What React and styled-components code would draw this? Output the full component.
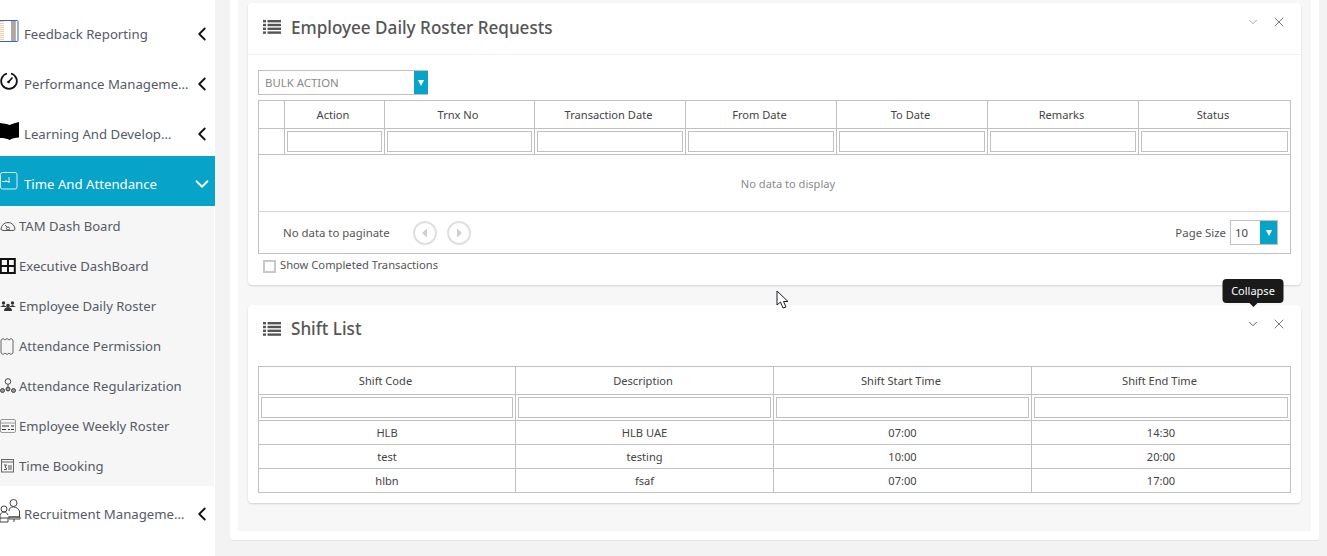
import styled, { createGlobalStyle } from "styled-components";
import { ChevronLeft, ChevronDown, X } from "lucide-react";

const GlobalStyle = createGlobalStyle`
  html, body {
    margin: 0;
    padding: 0;
    height: 100%;
    overflow: hidden;
    background: #f3f3f3;
    font-family: "Noto Sans", "Open Sans", sans-serif;
  }
  * {
    box-sizing: border-box;
  }
`;

const Page = styled.div`
  display: flex;
  width: 1327px;
  height: 556px;
  overflow: hidden;
  position: relative;
`;

const Sidebar = styled.aside`
  width: 215px;
  flex: none;
  background: #fff;
  padding-top: 6px;
`;

const NavItem = styled.div`
  display: flex;
  align-items: center;
  height: 50px;
  padding-right: 2px;
  font-size: 13.2px;
  color: ${(p) => (p.$active ? "#fff" : "#555a66")};
  background: ${(p) => (p.$active ? "#08a3c8" : "transparent")};
`;

const NavIcon = styled.span`
  width: 24px;
  flex: none;
  display: flex;
  align-items: center;
`;

const NavLabel = styled.span`
  padding-top: 6px;
  white-space: nowrap;
`;

const NavArrow = styled.span`
  display: flex;
  margin-left: auto;
  padding-top: 6px;
  color: ${(p) => (p.$active ? "#fff" : "#111")};
`;

const SubList = styled.div`
  background: #f6f6f6;
  margin-right: 1px;
`;

const SubItem = styled.div`
  display: flex;
  align-items: center;
  height: 40px;
  font-size: 13.1px;
  color: #555a66;
`;

const SubIcon = styled.span`
  width: 19px;
  flex: none;
  display: flex;
  align-items: center;
`;

const Main = styled.main`
  width: 1089px;
  height: 541px;
  flex: none;
  margin-left: 15px;
  background: #fff;
  padding: 0 8px 9px 8px;
  border-bottom: 1px solid #e6e6e6;
  border-radius: 0 0 4px 4px;
`;

const Content = styled.div`
  height: 100%;
  background: #f7f7f7;
  padding: 3px 10px 0;
  display: flex;
  flex-direction: column;
  gap: 20px;
`;

const Card = styled.section`
  background: #fff;
  border-radius: 4px;
  box-shadow: 0 1px 2px rgba(0, 0, 0, 0.16);
`;

const CardHeader = styled.header`
  display: flex;
  align-items: center;
  height: ${(p) => p.$height}px;
  padding: 0 14px 3px 15px;
  border-bottom: ${(p) => (p.$line ? "1px solid #f2f2f2" : "none")};
`;

const CardTitle = styled.h2`
  margin: 0 0 0 10px;
  font-size: 17.1px;
  font-weight: 500;
  color: #555;
`;

const CardTools = styled.div`
  margin-left: auto;
  margin-top: 11px;
  align-self: flex-start;
  display: flex;
  align-items: center;
  gap: 11px;
`;

const ToolButton = styled.span`
  position: relative;
  display: flex;
  color: ${(p) => p.$color};
`;

const Tooltip = styled.div`
  position: absolute;
  left: 50%;
  bottom: 28px;
  transform: translateX(-50%);
  width: 61px;
  height: 24px;
  border-radius: 4px;
  background: #1a1a1a;
  color: #fff;
  font-size: 11px;
  line-height: 23px;
  text-align: center;
  &::after {
    content: "";
    position: absolute;
    left: 50%;
    top: 100%;
    margin-left: -4px;
    border: 4px solid transparent;
    border-bottom: 0;
    border-top-color: #1a1a1a;
  }
`;

const CardBody = styled.div`
  padding: ${(p) => p.$padding};
`;

const Dropdown = styled.div`
  display: flex;
  width: ${(p) => p.$width}px;
  height: 25px;
  border: 1px solid #c0c0c0;
  background: #fff;
  font-size: 11.4px;
  color: ${(p) => p.$color};
  align-items: center;
  padding-left: ${(p) => p.$inset}px;
`;

const DropButton = styled.span`
  margin-left: auto;
  margin-right: ${(p) => (p.$flush ? "-1px" : "0")};
  height: 100%;
  width: ${(p) => p.$width}px;
  background: #08a3c8;
  display: flex;
  align-items: center;
  justify-content: center;
  &::before {
    content: "";
    border: 3.5px solid transparent;
    border-bottom: 0;
    border-top: 6px solid #fff;
  }
`;

const Grid = styled.table`
  width: 100%;
  table-layout: fixed;
  border-collapse: collapse;
  font-size: 11.1px;
  color: #444;
  margin-top: ${(p) => p.$top || 0}px;

  th, td {
    border: 1px solid #c0c0c0;
    text-align: center;
    padding: 0;
    font-weight: 400;
  }
  th {
    padding-right: 3px;
  }
`;

const Col = styled.col`
  width: ${(p) => p.$width}px;
`;

const HeadRow = styled.tr`
  height: 28px;
`;

const FilterRow = styled.tr`
  height: 26px;
`;

const DataRow = styled.tr`
  height: 24px;
`;

const FilterBox = styled.div`
  height: 21px;
  margin: 0 2px;
  border: 1px solid #c0c0c0;
  background: #fff;
`;

const EmptyCell = styled.td`
  && {
    height: 57px;
    padding-left: 27px;
    color: #8a8a8a;
    border-bottom-color: #d4d4d4;
  }
`;

const PagerCell = styled.td`
  height: 42px;
`;

const Pager = styled.div`
  display: flex;
  align-items: center;
  padding: 0 12px 0 24px;
  color: #555;
  font-size: 11.4px;
`;

const PagerNote = styled.span`
  width: 130px;
  flex: none;
  text-align: left;
`;

const PagerButton = styled.span`
  display: flex;
  margin-right: 10px;
`;

const PageSize = styled.span`
  margin-left: auto;
  margin-right: 4px;
`;

const CheckRow = styled.label`
  display: flex;
  align-items: flex-start;
  margin: 6px 0 0 5px;
  font-size: 11.2px;
  line-height: 9px;
  color: #555;
`;

const CheckBox = styled.span`
  width: 13px;
  height: 13px;
  margin-right: 4px;
  border: 2px solid #c8c8c8;
  background: #fff;
`;

const Cursor = styled.svg`
  position: absolute;
  left: 776px;
  top: 290px;
`;

function ListIcon() {
  return (
    <svg width="18" height="14" viewBox="0 0 18 14" fill="#555">
      <rect x="0" y="0" width="3" height="2.4" />
      <rect x="4.5" y="0" width="13.5" height="2.4" />
      <rect x="0" y="3.8" width="3" height="2.4" />
      <rect x="4.5" y="3.8" width="13.5" height="2.4" />
      <rect x="0" y="7.6" width="3" height="2.4" />
      <rect x="4.5" y="7.6" width="13.5" height="2.4" />
      <rect x="0" y="11.4" width="3" height="2.4" />
      <rect x="4.5" y="11.4" width="13.5" height="2.4" />
    </svg>
  );
}

function RoundArrow({ dir }) {
  const tri = dir === "left" ? "M14 7.5 L9 12 L14 16.5 Z" : "M10 7.500 L15 12 L10 16.500 Z";
  return (
    <svg width="24" height="24" viewBox="0 0 24 24">
      <circle cx="12" cy="12" r="11" fill="#fff" stroke="#e0e0e0" strokeWidth="2" />
      <path d={tri} fill="#cfcfcf" />
    </svg>
  );
}

const navIcons = {
  feedback: (
    <svg width="19" height="22" viewBox="0 0 19 22" fill="none">
      <rect x="-2" y="0.5" width="20" height="21" rx="1" stroke="#3b5fc4" />
      <path d="M1 1v20M3 1v20" stroke="#e09a4a" strokeDasharray="1 1" />
      <path d="M12 1v20M14 1v20" stroke="#555" />
      <path d="M15.5 1v20" stroke="#d8b080" />
    </svg>
  ),
  performance: (
    <svg width="18" height="18" viewBox="0 0 18 18" fill="none" stroke="#111" strokeWidth="1.8">
      <path d="M7 1.500 A7.800 7.800 0 1 0 11 1.500" />
      <path d="M8.500 10 L12.500 5.500" strokeWidth="1.600" />
      <circle cx="8.500" cy="10" r="1.300" fill="#111" stroke="none" />
    </svg>
  ),
  learning: (
    <svg width="19" height="18" viewBox="0 0 19 18" fill="#000">
      <path d="M0 1 C4 1.500 7 2 9.500 3 C12 2 15 1 19 0 V15.500 C15 15.500 12 16.500 9.500 18 C7 16.500 4 16 0 16 Z" />
    </svg>
  ),
  time: (
    <svg width="18" height="18" viewBox="0 0 18 18" fill="none" stroke="#d5f1f7">
      <rect x="0.5" y="0.5" width="16.5" height="16.5" rx="2" />
      <path d="M2 9.500h8M9 5v6M6 8v2" />
    </svg>
  ),
  recruitment: (
    <svg width="21" height="24" viewBox="0 0 21 24" fill="none" stroke="#444" strokeWidth="1">
      <circle cx="13.500" cy="4" r="3.500" />
      <path d="M9 12c0-3 2-4 4.500-4s4.500 1 6 4v6H8" />
      <circle cx="4" cy="10" r="3" />
      <path d="M0 20v-4c1-2 2-3 4-3s3 1 4 3" />
      <path d="M0 19h8v4H0zM9 18h11v2H9zM14 20v3" />
    </svg>
  ),
};

const subIcons = {
  tam: (
    <svg width="16" height="12" viewBox="0 0 16 12" fill="none" stroke="#555">
      <path d="M1 9.500a7 7 0 0 1 14 0l-2 1H3z" />
      <circle cx="8" cy="8.500" r="1.500" />
      <path d="M7 7 5 5" />
    </svg>
  ),
  exec: (
    <svg width="16" height="16" viewBox="0 0 16 16" fill="none" stroke="#111" strokeWidth="2">
      <rect x="0.800" y="1" width="14" height="14" />
      <path d="M8 1v14M1 8h14" />
    </svg>
  ),
  roster: (
    <svg width="16" height="12" viewBox="0 0 16 12" fill="#333">
      <circle cx="3.500" cy="3" r="1.700" />
      <circle cx="12.500" cy="3" r="1.700" />
      <circle cx="8" cy="5.500" r="1.800" />
      <path d="M0 7l3.500-2L7 7zM9 7l3.500-2L16 7zM4 11c0-2.500 2-4 4-4s4 1.500 4 4z" />
    </svg>
  ),
  permission: (
    <svg width="14" height="17" viewBox="0 0 14 17" fill="none" stroke="#666">
      <path d="M1 2l2-1.500 2 1.500 2-1.500 2 1.500 2-1.500 2 1.500v13l-2 1.500-2-1.500-2 1.500-2-1.500-2 1.500-2-1.500z" />
    </svg>
  ),
  regular: (
    <svg width="16" height="17" viewBox="0 0 16 17" fill="none" stroke="#444">
      <circle cx="8" cy="3.500" r="2.800" />
      <circle cx="2.500" cy="12.500" r="2" fill="#999" />
      <circle cx="8" cy="11" r="2" fill="#999" />
      <circle cx="13.500" cy="12.500" r="2" fill="#999" />
      <path d="M8 6.500V9" />
    </svg>
  ),
  weekly: (
    <svg width="16" height="16" viewBox="0 0 16 16" fill="none" stroke="#999">
      <rect x="0.500" y="1.500" width="15" height="13" rx="1.500" />
      <path d="M1 5h14" />
      <path d="M2 8h7M11 8h3M2 11.500h4M8 11.500h2M11 11.500h3" stroke="#333" />
    </svg>
  ),
  booking: (
    <svg width="14" height="14" viewBox="0 0 14 14" fill="none" stroke="#666">
      <rect x="1.500" y="0.500" width="12" height="12.500" />
      <path d="M1.500 3h12" />
      <path d="M4 6h2.500L5 8l1.500 1v1.500H4M9 6v5M11 6v5" stroke="#555" />
    </svg>
  ),
};

const sections = [
  { label: "Feedback Reporting", icon: navIcons.feedback },
  { label: "Performance Manageme…", icon: navIcons.performance },
  { label: "Learning And Develop…", icon: navIcons.learning },
];

const subItems = [
  { label: "TAM Dash Board", icon: subIcons.tam },
  { label: "Executive DashBoard", icon: subIcons.exec },
  { label: "Employee Daily Roster", icon: subIcons.roster },
  { label: "Attendance Permission", icon: subIcons.permission },
  { label: "Attendance Regularization", icon: subIcons.regular },
  { label: "Employee Weekly Roster", icon: subIcons.weekly },
  { label: "Time Booking", icon: subIcons.booking },
];

const rosterColumns = [
  { label: "Action", width: 100 },
  { label: "Trnx No", width: 150 },
  { label: "Transaction Date", width: 151 },
  { label: "From Date", width: 151 },
  { label: "To Date", width: 151 },
  { label: "Remarks", width: 151 },
  { label: "Status", width: 152 },
];

const shiftColumns = [
  { label: "Shift Code", width: 257 },
  { label: "Description", width: 258 },
  { label: "Shift Start Time", width: 258 },
  { label: "Shift End Time", width: 259 },
];

const shifts = [
  ["HLB", "HLB UAE", "07:00", "14:30"],
  ["test", "testing", "10:00", "20:00"],
  ["hlbn", "fsaf", "07:00", "17:00"],
];

function Tools({ tip }) {
  return (
    <CardTools>
      <ToolButton $color={tip ? "#555" : "#9aa3b5"}>
        {tip && <Tooltip>Collapse</Tooltip>}
        <ChevronDown size={14} strokeWidth={1.6} />
      </ToolButton>
      <ToolButton $color="#66707c">
        <X size={16} strokeWidth={1.4} />
      </ToolButton>
    </CardTools>
  );
}

export default function App() {
  return (
    <Page>
      <GlobalStyle />
      <Sidebar>
        {sections.map((s) => (
          <NavItem key={s.label}>
            <NavIcon>{s.icon}</NavIcon>
            <NavLabel>{s.label}</NavLabel>
            <NavArrow>
              <ChevronLeft size={22} strokeWidth={2} />
            </NavArrow>
          </NavItem>
        ))}
        <NavItem $active>
          <NavIcon>{navIcons.time}</NavIcon>
          <NavLabel>Time And Attendance</NavLabel>
          <NavArrow $active>
            <ChevronDown size={22} strokeWidth={2} />
          </NavArrow>
        </NavItem>
        <SubList>
          {subItems.map((s) => (
            <SubItem key={s.label}>
              <SubIcon>{s.icon}</SubIcon>
              {s.label}
            </SubItem>
          ))}
        </SubList>
        <NavItem>
          <NavIcon>{navIcons.recruitment}</NavIcon>
          <NavLabel>Recruitment Manageme…</NavLabel>
          <NavArrow>
            <ChevronLeft size={22} strokeWidth={2} />
          </NavArrow>
        </NavItem>
      </Sidebar>
      <Main>
        <Content>
          <Card>
            <CardHeader $height={52} $line>
              <ListIcon />
              <CardTitle>Employee Daily Roster Requests</CardTitle>
              <Tools />
            </CardHeader>
            <CardBody $padding="15px 10px 12px">
              <Dropdown $width={170} $color="#8a8a8a" $inset={6}>
                BULK ACTION
                <DropButton $width={14} $flush />
              </Dropdown>
              <Grid $top={5}>
                <colgroup>
                  <Col $width={26} />
                  {rosterColumns.map((c) => (
                    <Col key={c.label} $width={c.width} />
                  ))}
                </colgroup>
                <thead>
                  <HeadRow>
                    <th />
                    {rosterColumns.map((c) => (
                      <th key={c.label}>{c.label}</th>
                    ))}
                  </HeadRow>
                  <FilterRow>
                    <td />
                    {rosterColumns.map((c) => (
                      <td key={c.label}>
                        <FilterBox />
                      </td>
                    ))}
                  </FilterRow>
                </thead>
                <tbody>
                  <tr>
                    <EmptyCell colSpan={8}>No data to display</EmptyCell>
                  </tr>
                  <tr>
                    <PagerCell colSpan={8}>
                      <Pager>
                        <PagerNote>No data to paginate</PagerNote>
                        <PagerButton>
                          <RoundArrow dir="left" />
                        </PagerButton>
                        <PagerButton>
                          <RoundArrow dir="right" />
                        </PagerButton>
                        <PageSize>Page Size</PageSize>
                        <Dropdown $width={48} $color="#444" $inset={4}>
                          10
                          <DropButton $width={17} />
                        </Dropdown>
                      </Pager>
                    </PagerCell>
                  </tr>
                </tbody>
              </Grid>
              <CheckRow>
                <CheckBox />
                Show Completed Transactions
              </CheckRow>
            </CardBody>
          </Card>
          <Card>
            <CardHeader $height={50}>
              <ListIcon />
              <CardTitle>Shift List</CardTitle>
              <Tools tip />
            </CardHeader>
            <CardBody $padding="11px 11px 10px 10px">
              <Grid>
                <colgroup>
                  {shiftColumns.map((c) => (
                    <Col key={c.label} $width={c.width} />
                  ))}
                </colgroup>
                <thead>
                  <HeadRow>
                    {shiftColumns.map((c) => (
                      <th key={c.label}>{c.label}</th>
                    ))}
                  </HeadRow>
                  <FilterRow>
                    {shiftColumns.map((c) => (
                      <td key={c.label}>
                        <FilterBox />
                      </td>
                    ))}
                  </FilterRow>
                </thead>
                <tbody>
                  {shifts.map((row) => (
                    <DataRow key={row[0]}>
                      {row.map((v, i) => (
                        <td key={i}>{v}</td>
                      ))}
                    </DataRow>
                  ))}
                </tbody>
              </Grid>
            </CardBody>
          </Card>
        </Content>
      </Main>
      <Cursor width="14" height="20" viewBox="0 0 14 20">
        <path d="M1 1 L1 15 L4.500 12 L7 18 L10 17 L7.500 11.500 L12 11.500 Z" fill="#fff" stroke="#1a1a2a" />
      </Cursor>
    </Page>
  );
}
